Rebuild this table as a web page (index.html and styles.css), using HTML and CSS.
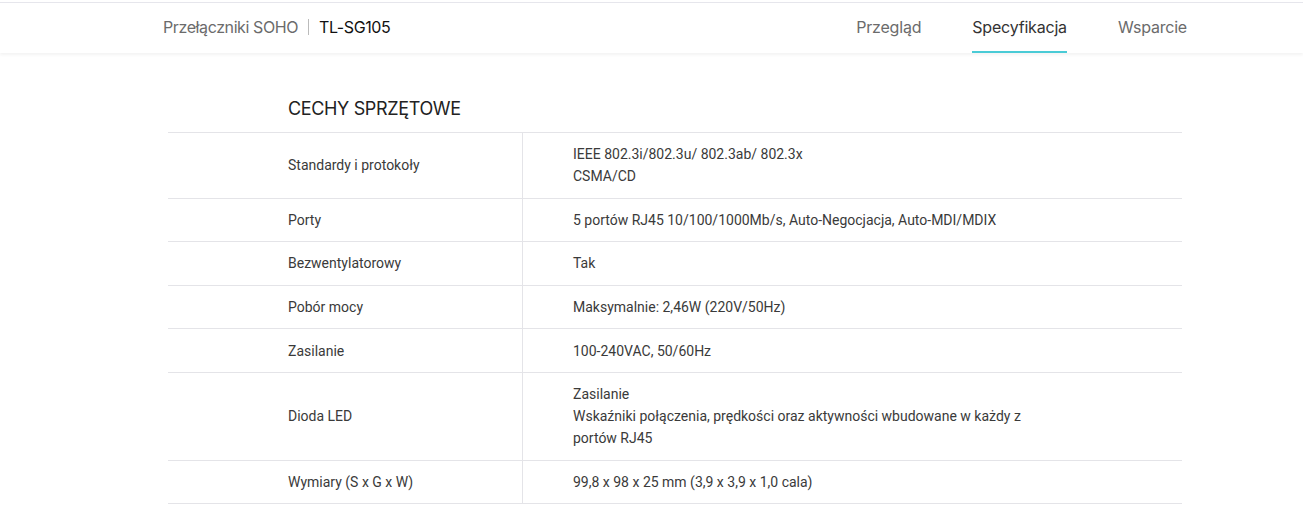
FILE: index.html
```html
<!DOCTYPE html>
<html lang="pl">
<head>
<meta charset="utf-8">
<link rel="stylesheet" href="styles.css">
</head>
<body>
<div class="topline"></div>
<header class="header">
  <div class="header-inner">
    <div class="crumb">
      <span class="cat">Przełączniki SOHO</span>
      <span class="sep"></span>
      <span class="model">TL-SG105</span>
    </div>
    <nav class="nav">
      <a class="nav-item">Przegląd</a>
      <a class="nav-item active">Specyfikacja</a>
      <a class="nav-item">Wsparcie</a>
    </nav>
  </div>
</header>
<main class="main">
  <h2 class="title">CECHY SPRZĘTOWE</h2>
  <table class="spec">
    <tr><th>Standardy i protokoły</th><td>IEEE 802.3i/802.3u/ 802.3ab/ 802.3x<br>CSMA/CD</td></tr>
    <tr><th>Porty</th><td>5 portów RJ45 10/100/1000Mb/s, Auto-Negocjacja, Auto-MDI/MDIX</td></tr>
    <tr><th>Bezwentylatorowy</th><td>Tak</td></tr>
    <tr><th>Pobór mocy</th><td>Maksymalnie: 2,46W (220V/50Hz)</td></tr>
    <tr><th>Zasilanie</th><td>100-240VAC, 50/60Hz</td></tr>
    <tr><th>Dioda LED</th><td>Zasilanie<br>Wskaźniki połączenia, prędkości oraz aktywności wbudowane w każdy z<br>portów RJ45</td></tr>
    <tr><th>Wymiary (S x G x W)</th><td>99,8 x 98 x 25 mm (3,9 x 3,9 x 1,0 cala)</td></tr>
  </table>
</main>
</body>
</html>
```
FILE: styles.css
```css
html, body {
  margin: 0;
  padding: 0;
  background: #fff;
}
body {
  font-family: Inter, "Liberation Sans", sans-serif;
  color: #333;
}
.topline {
  height: 2px;
  background: #fff;
  border-bottom: 1px solid #e6e6ec;
}
.header {
  height: 50px;
  background: #fff;
  box-shadow: 0 2px 3px rgba(0, 0, 0, 0.05);
  position: relative;
}
.header-inner {
  width: 1024px;
  margin-left: 163px;
  height: 50px;
  display: flex;
  align-items: stretch;
  justify-content: space-between;
}
.crumb {
  display: flex;
  align-items: center;
  font-size: 16px;
  letter-spacing: -0.4px;
  padding-bottom: 2px;
}
.cat {
  color: #6b6b6b;
}
.sep {
  width: 1px;
  height: 16px;
  background: #bbb;
  margin: 0 10px;
}
.model {
  color: #111;
}
.nav {
  display: flex;
  gap: 51px;
}
.nav-item {
  display: flex;
  align-items: center;
  font-size: 16px;
  letter-spacing: -0.2px;
  color: #6b6b6b;
  border-bottom: 2px solid transparent;
  box-sizing: border-box;
}
.nav-item.active {
  color: #333;
  border-bottom-color: #4acbd6;
}
.main {
  width: 1014px;
  margin-left: 168px;
  padding-top: 44px;
  font-family: Roboto, "Liberation Sans", sans-serif;
}
.title {
  margin: 0;
  padding-left: 120px;
  font-family: Inter, "Liberation Sans", sans-serif;
  font-weight: 400;
  font-size: 18px;
  letter-spacing: -0.35px;
  line-height: 24px;
  color: #222;
  height: 35px;
}
.spec {
  width: 100%;
  border-collapse: collapse;
  font-size: 14px;
  line-height: 22px;
  color: #3a3a3a;
}
.spec tr {
  border-top: 1px solid #e4e4e8;
  border-bottom: 1px solid #e4e4e8;
}
.spec th {
  width: 234px;
  padding: 10.3px 0 10.3px 120px;
  text-align: left;
  font-weight: 400;
  border-right: 1px solid #e4e4e8;
  vertical-align: middle;
}
.spec td {
  padding: 10.3px 0 10.3px 50px;
  vertical-align: middle;
}
```
